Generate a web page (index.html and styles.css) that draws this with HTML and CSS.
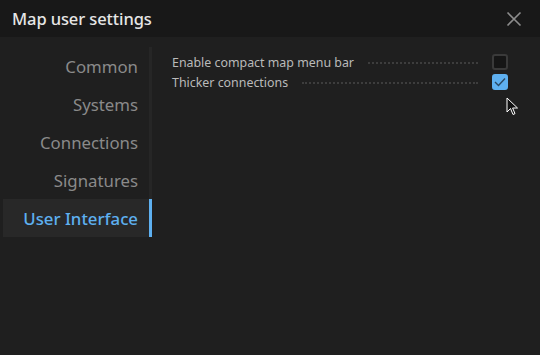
FILE: index.html
```html
<!DOCTYPE html>
<html lang="en">
<head>
    <meta charset="UTF-8">
    <meta name="viewport" content="width=device-width, initial-scale=1.0">
    <title>Map user settings</title>
    <link rel="stylesheet" href="styles.css">
</head>
<body>
    <div class="dialog">
        <div class="dialog-header">
            <h1>Map user settings</h1>
            <button class="close" aria-label="Close">
                <svg width="16" height="16" viewBox="0 0 16 16"><path d="M1.5 1.5 L14.5 14.5 M14.5 1.5 L1.5 14.5" stroke="#8c8c8c" stroke-width="1.6" fill="none"/></svg>
            </button>
        </div>

        <div class="dialog-body">
            <nav class="tabs">
                <div class="tab">Common</div>
                <div class="tab">Systems</div>
                <div class="tab">Connections</div>
                <div class="tab">Signatures</div>
                <div class="tab active">User Interface</div>
            </nav>

            <div class="options">
                <label class="option">
                    <span class="option-label">Enable compact map menu bar</span>
                    <span class="leader"></span>
                    <span class="checkbox"></span>
                </label>
                <label class="option">
                    <span class="option-label">Thicker connections</span>
                    <span class="leader"></span>
                    <span class="checkbox checked">
                        <svg width="12" height="10" viewBox="0 0 12 10"><path d="M1 5 L4.5 8.5 L11 1.5" stroke="#2a4862" stroke-width="1.4" fill="none"/></svg>
                    </span>
                </label>
            </div>
        </div>

        <!-- mouse pointer -->
        <svg class="pointer" width="13" height="20" viewBox="0 0 13 20"><path d="M1 1 L1 15 L4.5 11.5 L7 17.5 L9 16.6 L6.6 11 L11.5 11 Z" fill="#111" stroke="#fff" stroke-width="1"/></svg>
    </div>
</body>
</html>
```

FILE: styles.css
```css
body {
    margin: 0;
    background-color: #1f1f1f;
    font-family: "Noto Sans", "Open Sans", sans-serif;
}
.dialog {
    position: relative;
    width: 540px;
    height: 355px;
    background-color: #1f1f1f;
}
.dialog-header {
    display: flex;
    align-items: center;
    justify-content: space-between;
    height: 37px;
    padding: 0 18px 0 12px;
    background-color: #181818;
}
.dialog-header h1 {
    margin: 0;
    font-size: 16.5px;
    font-weight: 500;
    color: #e6e6e6;
    letter-spacing: -0.1px;
}
.close {
    display: flex;
    padding: 0;
    background: none;
    border: none;
    cursor: pointer;
}
.dialog-body {
    display: flex;
    padding-top: 10px;
}
.tabs {
    width: 146px;
    margin-left: 3px;
    border-right: 3px solid #262626;
}
.tab {
    height: 38px;
    line-height: 40px;
    padding-right: 11px;
    text-align: right;
    font-size: 16.8px;
    color: #8a8a8a;
    cursor: pointer;
}
.tab.active {
    background-color: #282828;
    color: #5eb0f0;
    font-weight: 500;
    margin-right: -3px;
    border-right: 3px solid #5eb0f0;
}
.options {
    flex: 1;
    padding: 5px 32px 0 20px;
}
.option {
    display: flex;
    align-items: center;
    height: 20px;
    font-size: 12.4px;
    color: #bababa;
}
.leader {
    flex: 1;
    margin: 1px 14px 0 14px;
    border-bottom: 2px dotted #3d3d3d;
}
.checkbox {
    display: flex;
    align-items: center;
    justify-content: center;
    width: 12px;
    height: 12px;
    border: 2px solid #3a3a3a;
    border-radius: 3px;
    background-color: #161616;
}
.checkbox.checked {
    background-color: #5eb0f0;
    border-color: #5eb0f0;
}
.pointer {
    position: absolute;
    left: 506px;
    top: 97px;
}
```
